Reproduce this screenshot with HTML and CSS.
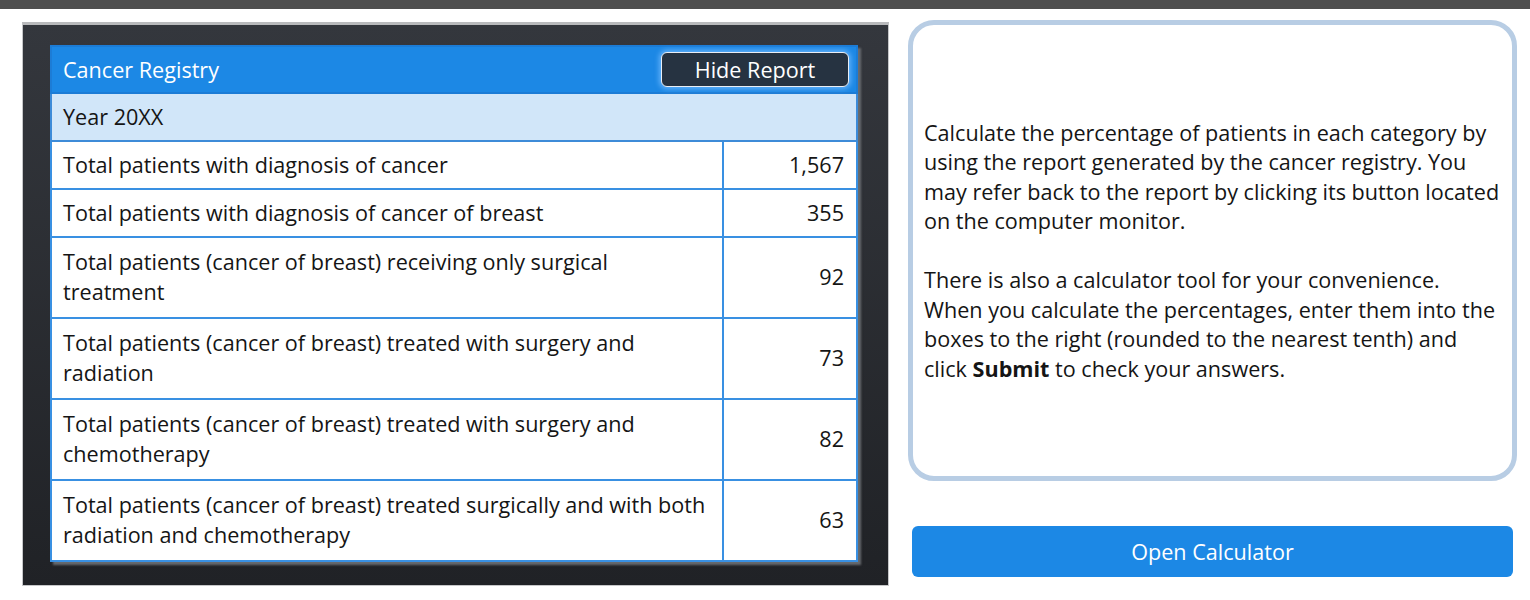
FILE: index.html
```html
<!DOCTYPE html>
<html lang="en">
<head>
    <meta charset="UTF-8">
    <meta name="viewport" content="width=device-width, initial-scale=1.0">
    <title>Cancer Registry</title>
    <link rel="stylesheet" href="styles.css">
</head>
<body>
    <div class="topbar"></div>

    <main class="page">
        <div class="monitor">
            <table class="report">
                <tr class="head">
                    <th colspan="2">
                        <div class="head_inner">
                            <span>Cancer Registry</span>
                            <button class="hide_btn">Hide Report</button>
                        </div>
                    </th>
                </tr>
                <tr class="year">
                    <td colspan="2">Year 20XX</td>
                </tr>
                <tr>
                    <td>Total patients with diagnosis of cancer</td>
                    <td class="num">1,567</td>
                </tr>
                <tr>
                    <td>Total patients with diagnosis of cancer of breast</td>
                    <td class="num">355</td>
                </tr>
                <tr class="tall">
                    <td>Total patients (cancer of breast) receiving only surgical treatment</td>
                    <td class="num">92</td>
                </tr>
                <tr class="tall">
                    <td>Total patients (cancer of breast) treated with surgery and radiation</td>
                    <td class="num">73</td>
                </tr>
                <tr class="tall">
                    <td>Total patients (cancer of breast) treated with surgery and chemotherapy</td>
                    <td class="num">82</td>
                </tr>
                <tr class="tall">
                    <td>Total patients (cancer of breast) treated surgically and with both radiation and chemotherapy</td>
                    <td class="num">63</td>
                </tr>
            </table>
        </div>

        <div class="side">
            <div class="info">
                <div>
                    <p>Calculate the percentage of patients in each category by using the report generated by the cancer registry. You may refer back to the report by clicking its button located on the computer monitor.</p>
                    <p>There is also a calculator tool for your convenience. When you calculate the percentages, enter them into the boxes to the right (rounded to the nearest tenth) and click <b>Submit</b> to check your answers.</p>
                </div>
            </div>
            <button class="calc_btn">Open Calculator</button>
        </div>
    </main>
</body>
</html>
```

FILE: styles.css
```css
*{
    margin: 0;
    padding: 0;
    box-sizing: border-box;
}

body{
    font-family: 'Open Sans', 'Noto Sans', sans-serif;
    font-size: 21.6px;
    color: #151515;
    background-color: #ffffff;
}

.topbar{
    height: 9px;
    background-color: #4e4e4e;
}

.page{
    display: flex;
    align-items: flex-start;
    gap: 19px;
    padding: 11px 0 0 22px;
}

/* monitor with the report */
.monitor{
    width: 867px;
    height: 564px;
    margin-top: 2px;
    padding: 20px 0 0 27px;
    background: linear-gradient(#34373d, #202226);
    border: 1px solid #c6c7c9;
    border-top: 3px solid #b9babc;
}

.report{
    width: 808px;
    border-collapse: collapse;
    background-color: #ffffff;
    box-shadow: 3px 3px 2px rgba(110, 113, 118, 0.9);
}

.report td,
.report th{
    border: 2px solid #3990e2;
    padding: 8px 12px 8px 11px;
    line-height: 30px;
    font-weight: 400;
    text-align: left;
    vertical-align: middle;
}

.report .tall td{
    padding-top: 9px;
    padding-bottom: 10px;
}

.report .num{
    width: 134px;
    text-align: right;
}

.report .head th{
    background-color: #1c88e5;
    color: #ffffff;
    padding: 5px 7px 5px 11px;
    border-color: #1c7cd6;
}

.head_inner{
    display: flex;
    align-items: center;
    justify-content: space-between;
}

.hide_btn{
    width: 188px;
    height: 35px;
    font-family: inherit;
    font-size: 21.6px;
    color: #ffffff;
    background-color: #263341;
    border: 1.5px solid #e8eef5;
    border-radius: 6px;
    box-shadow: 0 0 5px 2px rgba(120, 190, 255, 0.75);
}

.report .year td{
    background-color: #d1e6f9;
    border-color: #3d8bd8;
}

/* right column */
.side{
    width: 609px;
}

.info{
    height: 461px;
    display: flex;
    align-items: center;
    padding: 0 10px 0 11px;
    border: 5px solid #b8cde4;
    border-radius: 26px;
    line-height: 29.5px;
}

.info p + p{
    margin-top: 29.5px;
}

.calc_btn{
    display: block;
    width: 601px;
    height: 51px;
    margin: 45px 4px 0;
    font-family: inherit;
    font-size: 21.6px;
    color: #ffffff;
    background-color: #1c88e5;
    border: none;
    border-radius: 6px;
}
```
